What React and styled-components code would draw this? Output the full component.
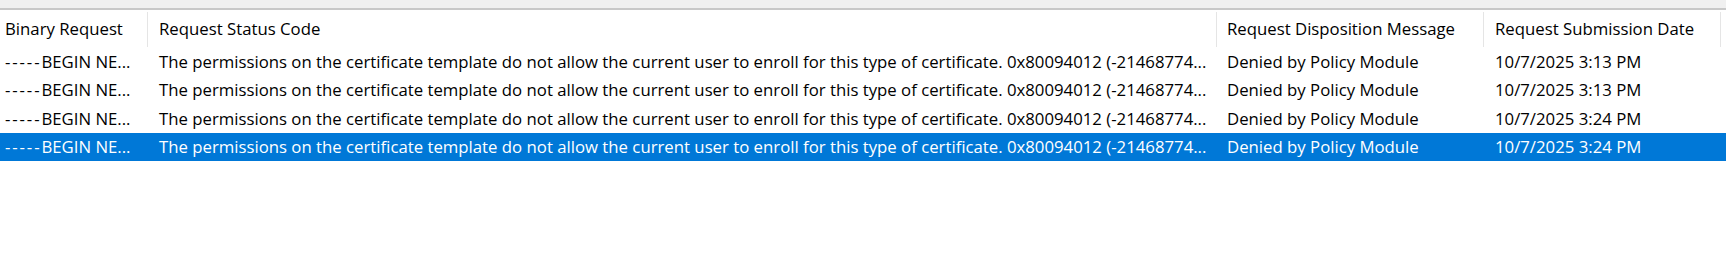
import React from 'react';
import styled, { createGlobalStyle } from 'styled-components';

const GlobalStyle = createGlobalStyle`
html, body {
margin: 0;
padding: 0;
background: #ffffff;
}
body {
font-family: "Open Sans", "Noto Sans", sans-serif;
font-size: 16.75px;
color: #000000;
}
`;

const Window = styled.div`
width: 1726px;
height: 279px;
background: #ffffff;
overflow: hidden;
`;

const TopStrip = styled.div`
height: 8px;
background: #f0f0f0;
border-bottom: 2px solid #c8c8c8;
`;

const Table = styled.div`
display: flex;
flex-direction: column;
`;

const HeaderRow = styled.div`
display: flex;
height: 37px;
align-items: stretch;
`;

const HeaderCell = styled.div`
width: ${props => props.width}px;
flex: none;
display: flex;
align-items: center;
padding-left: ${props => props.pad}px;
box-sizing: border-box;
white-space: nowrap;
overflow: hidden;
position: relative;
&::after {
content: '';
position: absolute;
right: 0;
top: 2px;
bottom: 0;
width: 1px;
background: #e5e5e5;
}
`;

const Row = styled.div`
display: flex;
height: 28.5px;
align-items: center;
background: ${props => (props.selected ? '#0078d7' : 'transparent')};
color: ${props => (props.selected ? '#ffffff' : '#000000')};
`;

const Cell = styled.div`
width: ${props => props.width}px;
flex: none;
padding-left: ${props => props.pad}px;
box-sizing: border-box;
white-space: nowrap;
overflow: hidden;
`;

const Dashes = styled.span`
letter-spacing: 1.9px;
`;

const COLUMNS = [
	{ key: 'binary', title: 'Binary Request', width: 148, pad: 5 },
	{ key: 'status', title: 'Request Status Code', width: 1069, pad: 11 },
	{ key: 'disposition', title: 'Request Disposition Message', width: 267, pad: 10 },
	{ key: 'date', title: 'Request Submission Date', width: 237, pad: 11 },
];

const STATUS = 'The permissions on the certificate template do not allow the current user to enroll for this type of certificate. 0x80094012 (-21468774...';

const Binary = () => (
	<>
		<Dashes>-----</Dashes>BEGIN NE...
	</>
);

const ROWS = [
	{ id: 1, status: STATUS, disposition: 'Denied by Policy Module', date: '10/7/2025 3:13 PM' },
	{ id: 2, status: STATUS, disposition: 'Denied by Policy Module', date: '10/7/2025 3:13 PM' },
	{ id: 3, status: STATUS, disposition: 'Denied by Policy Module', date: '10/7/2025 3:24 PM' },
	{ id: 4, status: STATUS, disposition: 'Denied by Policy Module', date: '10/7/2025 3:24 PM', selected: true },
];

export default function App() {
	return (
		<Window>
			<GlobalStyle />
			<TopStrip />
			<Table>
				<HeaderRow>
					{COLUMNS.map(col => (
						<HeaderCell key={col.key} width={col.width} pad={col.pad}>{col.title}</HeaderCell>
					))}
				</HeaderRow>
				{ROWS.map(row => (
					<Row key={row.id} selected={row.selected}>
						{COLUMNS.map(col => (
							<Cell key={col.key} width={col.width} pad={col.pad}>
								{col.key === 'binary' ? <Binary /> : row[col.key]}
							</Cell>
						))}
					</Row>
				))}
			</Table>
		</Window>
	);
}
